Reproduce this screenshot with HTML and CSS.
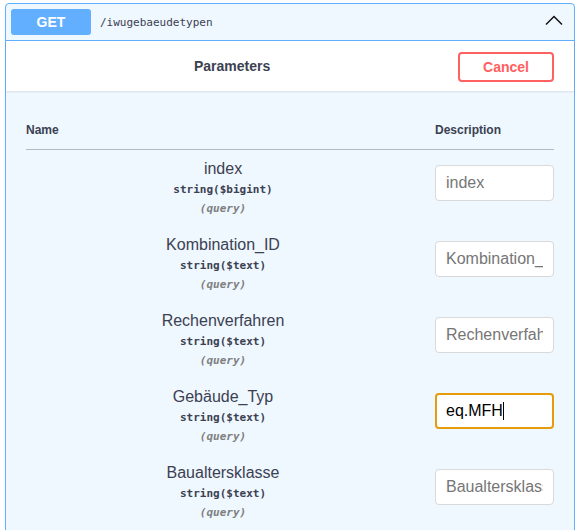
FILE: index.html
```html
<!DOCTYPE html>
<html lang="de">
<head>
<meta charset="utf-8">
<title>GET /iwugebaeudetypen</title>
<link rel="stylesheet" href="styles.css">
</head>
<body>
<div class="opblock">
  <div class="summary">
    <span class="method">GET</span>
    <span class="path">/iwugebaeudetypen</span>
    <svg class="arrow" width="20" height="20" viewBox="0 0 20 20"><polyline points="2,12.5 10,4.5 18,12.5" fill="none" stroke="#111" stroke-width="1.5"/></svg>
  </div>
  <div class="section-header">
    <h4 class="title">Parameters</h4>
    <button class="cancel">Cancel</button>
  </div>
  <div class="params">
    <div class="row head">
      <div class="th">Name</div>
      <div class="th">Description</div>
    </div>
    <div class="row">
      <div class="name-col">
        <div class="pname">index</div>
        <div class="ptype">string($bigint)</div>
        <div class="pin">(query)</div>
      </div>
      <div class="desc-col"><input class="field" type="text" placeholder="index"></div>
    </div>
    <div class="row">
      <div class="name-col">
        <div class="pname">Kombination_ID</div>
        <div class="ptype">string($text)</div>
        <div class="pin">(query)</div>
      </div>
      <div class="desc-col"><input class="field" type="text" placeholder="Kombination_ID"></div>
    </div>
    <div class="row">
      <div class="name-col">
        <div class="pname">Rechenverfahren</div>
        <div class="ptype">string($text)</div>
        <div class="pin">(query)</div>
      </div>
      <div class="desc-col"><input class="field" type="text" placeholder="Rechenverfahren"></div>
    </div>
    <div class="row">
      <div class="name-col">
        <div class="pname">Gebäude_Typ</div>
        <div class="ptype">string($text)</div>
        <div class="pin">(query)</div>
      </div>
      <div class="desc-col"><div class="field focused">eq.MFH<span class="caret"></span></div></div>
    </div>
    <div class="row">
      <div class="name-col">
        <div class="pname">Baualtersklasse</div>
        <div class="ptype">string($text)</div>
        <div class="pin">(query)</div>
      </div>
      <div class="desc-col"><input class="field" type="text" placeholder="Baualtersklasse"></div>
    </div>
  </div>
</div>
</body>
</html>
```
FILE: styles.css
```css
html, body {
  margin: 0;
  height: 530px;
  overflow: hidden;
  background: #fff;
}
body {
  padding: 3px 5px 0 5px;
  font-family: "Liberation Sans", Arial, sans-serif;
  color: #3b4151;
}
.opblock {
  border: 1px solid #61affe;
  border-radius: 4px;
  background: #eff7ff;
  min-height: 640px;
}
.summary {
  display: flex;
  align-items: center;
  padding: 5px;
  border-bottom: 1px solid #61affe;
}
.method {
  width: 80px;
  height: 26px;
  display: flex;
  align-items: center;
  justify-content: center;
  background: #61affe;
  color: #fff;
  border-radius: 3px;
  font-weight: bold;
  font-size: 14px;
}
.path {
  flex: 1;
  margin-left: 9px;
  font-family: "DejaVu Sans Mono", monospace;
  font-size: 11px;
  color: #3b4151;
}
.arrow {
  display: block;
  margin-right: 5px;
}
.section-header {
  display: flex;
  align-items: center;
  height: 50px;
  padding: 0 20px 0 0;
  background: #fff;
  box-shadow: 0 1px 2px rgba(0, 0, 0, 0.1);
  position: relative;
}
.title {
  flex: 1;
  margin: 0;
  text-align: center;
  font-size: 14px;
  font-weight: bold;
  color: #3b4151;
}
.cancel {
  margin-top: 1px;
  height: 30px;
  padding: 0 23px;
  border: 2px solid #ff6060;
  border-radius: 4px;
  background: transparent;
  color: #ff6060;
  font-family: "Liberation Sans", Arial, sans-serif;
  font-size: 14px;
  font-weight: bold;
}
.params {
  padding: 20px;
}
.row {
  display: grid;
  grid-template-columns: 1fr 119px;
  column-gap: 15px;
}
.head {
  border-bottom: 1px solid #b3bac6;
}
.th {
  padding: 12px 0;
  font-size: 12px;
  line-height: 14px;
  font-weight: bold;
}
.name-col {
  padding: 10px 0;
  text-align: center;
}
.pname {
  font-size: 16px;
  line-height: 18px;
}
.ptype {
  padding: 5px 0;
  font-family: "DejaVu Sans Mono", monospace;
  font-size: 11px;
  line-height: 14px;
  font-weight: 600;
}
.pin {
  font-family: "DejaVu Sans Mono", monospace;
  font-size: 11px;
  line-height: 14px;
  font-weight: 600;
  font-style: italic;
  color: #808080;
}
.desc-col {
  padding: 15px 0 0;
}
.field {
  box-sizing: border-box;
  display: block;
  width: 119px;
  height: 36px;
  margin: 0;
  padding: 8px 10px;
  border: 1px solid #d9d9d9;
  border-radius: 4px;
  background: #fff;
  font-family: "Liberation Sans", Arial, sans-serif;
  font-size: 16px;
  line-height: 18px;
  color: #000;
  outline: none;
}
.field::placeholder {
  color: #767676;
}
.focused {
  border: 2px solid #e59b0c;
  padding: 7px 9px;
  white-space: nowrap;
}
.caret {
  display: inline-block;
  width: 1px;
  height: 18px;
  background: #000;
  vertical-align: top;
}
```
